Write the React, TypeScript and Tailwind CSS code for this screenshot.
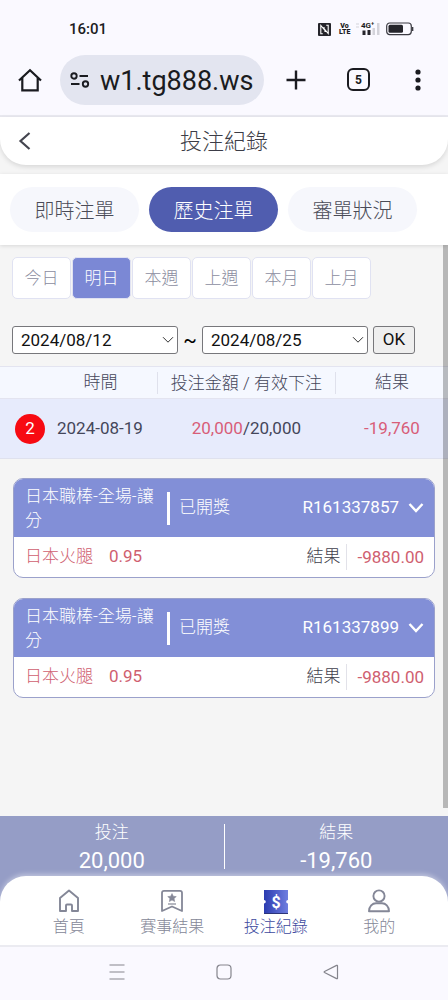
import { useState } from "react";
import type { ReactNode } from "react";

const TABS = ["即時注單", "歷史注單", "審單狀況"];
const RANGES = ["今日", "明日", "本週", "上週", "本月", "上月"];

const BETS = [
  { id: "R161337857", game: "日本職棒-全場-讓分", status: "已開獎", pick: "日本火腿", odds: "0.95", result: "-9880.00" },
  { id: "R161337899", game: "日本職棒-全場-讓分", status: "已開獎", pick: "日本火腿", odds: "0.95", result: "-9880.00" },
];

function StatusBar() {
  return (
    <div className="flex h-11 items-center justify-between pt-[14px] pr-[34px] pl-[69px] text-[#1c1c22]">
      <span className="text-[15px] font-medium">16:01</span>
      <div className="flex items-center">
        <svg width="13" height="13" viewBox="0 0 13 13" className="mr-2" aria-hidden="true">
          <rect width="13" height="13" rx="1" fill="#25252b" />
          <path d="M4.800 10.800H2.800V2.500L7 7.500V9M8.200 2.200h2v8.300L6 5.500V4" fill="none" stroke="#fff" strokeWidth="1.100" />
        </svg>
        <div className="mr-[6px] w-[11px] text-center text-[7px] leading-[6px] font-black">
          <div>Vo</div>
          <div>LTE</div>
        </div>
        <div className="relative mr-[6px] h-[14px] w-6">
          <svg width="24" height="14" viewBox="0 0 24 14" aria-hidden="true">
            <path d="M0 2h3M0 5h3" stroke="#d3d3da" />
            <path d="M6.500 8.500h3v4.500h-3zM11.500 8h3v5h-3z" fill="#25252b" />
            <path d="M16.500 6h2.500v7h-2.500zM21 1h2.500v12H21z" fill="#d3d3da" />
          </svg>
          <span className="absolute top-0 left-[5px] text-[8px] leading-[8px] font-bold">4G⁺</span>
        </div>
        <svg width="28" height="14" viewBox="0 0 28 14" aria-hidden="true">
          <rect x="0.700" y="1" width="24.600" height="11.600" rx="3" fill="none" stroke="#3b3b42" strokeWidth="1.200" />
          <rect x="2.500" y="2.800" width="14.500" height="8" rx="1.500" fill="#25252b" />
          <path d="M26.600 5v4" stroke="#3b3b42" strokeWidth="1.500" />
        </svg>
      </div>
    </div>
  );
}

function BrowserBar() {
  return (
    <div className="flex h-[73px] items-center border-b-2 border-[#e9e9f0] pr-[25px] pl-[18px] text-[#1a1b20]">
      <button type="button" aria-label="Home">
        <svg width="24" height="26" viewBox="0 0 24 26" fill="none" stroke="currentColor" strokeWidth="2.200" aria-hidden="true">
          <path d="M1 13.500 12 3.200l11 10.300M4.300 11v12.300h15.400V11" />
        </svg>
      </button>
      <div className="ml-[18px] flex h-[50px] flex-1 items-center rounded-full bg-[#e3e5f0] pl-[10px]">
        <svg width="20" height="18" viewBox="0 0 20 18" fill="none" stroke="currentColor" strokeWidth="1.900" aria-hidden="true">
          <circle cx="4" cy="5" r="2.700" />
          <path d="M9.500 5H18M1 13h8.500" />
          <circle cx="15.500" cy="13" r="2.700" />
        </svg>
        <span className="ml-[10px] pt-[2px] text-[27px] leading-9">w1.tg888.ws</span>
      </div>
      <button type="button" aria-label="New tab" className="ml-[22px]">
        <svg width="20" height="20" viewBox="0 0 20 20" stroke="currentColor" strokeWidth="2.400" aria-hidden="true">
          <path d="M10 .5v19M.5 10h19" />
        </svg>
      </button>
      <button
        type="button"
        className="ml-[41px] flex size-[23px] items-center justify-center rounded-[6px] border-2 border-current text-xs font-bold"
      >
        5
      </button>
      <button type="button" aria-label="Menu" className="ml-[43px]">
        <svg width="10" height="22" viewBox="0 0 10 22" fill="currentColor" aria-hidden="true">
          <circle cx="5" cy="3" r="2.600" />
          <circle cx="5" cy="11" r="2.600" />
          <circle cx="5" cy="19" r="2.600" />
        </svg>
      </button>
    </div>
  );
}

function DateSelect({ label, value }: { label: string; value: string }) {
  return (
    <div className="relative w-[166px]">
      <select
        aria-label={label}
        defaultValue={value}
        className="h-7 w-full appearance-none rounded-[3px] border border-[#77777b] bg-white px-2 text-[17px] leading-6 text-[#111]"
      >
        <option>{value}</option>
      </select>
      <svg
        className="pointer-events-none absolute top-2.5 right-1"
        width="12"
        height="8"
        viewBox="0 0 12 8"
        fill="none"
        stroke="#333"
        aria-hidden="true"
      >
        <path d="m1 1.200 5 5 5-5" />
      </svg>
    </div>
  );
}

function BetCard({ bet }: { bet: (typeof BETS)[number] }) {
  return (
    <article className="overflow-hidden rounded-[10px] border border-[#9ba1cb] bg-white text-[17px]">
      <div className="flex h-[58px] items-center bg-[#828fd7] pr-[10px] pl-[11px] text-white">
        <div className="w-[135px] font-light leading-6">{bet.game}</div>
        <div className="ml-[7px] h-[33px] w-[3px] bg-white" />
        <div className="ml-[9px] font-light">{bet.status}</div>
        <div className="ml-auto">{bet.id}</div>
        <button type="button" aria-label={`展開 ${bet.id}`} className="ml-[9px]">
          <svg width="16" height="12" viewBox="0 0 16 12" fill="none" stroke="currentColor" strokeWidth="2.400" aria-hidden="true">
            <path d="m1.500 2 6.500 7 6.500-7" />
          </svg>
        </button>
      </div>
      <div className="flex h-10 items-center pr-[10px] pl-[11px] text-[#cf6070]">
        <span className="font-light">{bet.pick}</span>
        <span className="ml-4">{bet.odds}</span>
        <span className="ml-auto font-light text-[#3f404c]">結果</span>
        <span className="ml-[6px] border-l border-[#e2e2e9] pl-[10px] leading-[26px]">{bet.result}</span>
      </div>
    </article>
  );
}

function NavItem({ label, active, children }: { label: string; active?: boolean; children: ReactNode }) {
  return (
    <a
      href="#"
      aria-current={active ? "page" : undefined}
      className={`flex flex-1 flex-col items-center gap-px text-base leading-6 font-light ${active ? "text-[#3d4a9e]" : "text-[#848797]"}`}
    >
      {children}
      {label}
    </a>
  );
}

export default function App() {
  const [tab, setTab] = useState("歷史注單");
  const [range, setRange] = useState("明日");

  return (
    <div className="flex min-h-screen flex-col bg-[#f5f5f5] font-[Roboto,'Noto_Sans_CJK_TC',sans-serif]">
      <div className="bg-[#faf9ff]">
        <StatusBar />
        <BrowserBar />
      </div>

      <header className="flex h-12 items-center rounded-b-[26px] bg-white px-4 shadow-[0_2px_5px_rgba(0,0,0,0.12)]">
        <button type="button" aria-label="返回" className="w-10 text-[#44454f]">
          <svg width="18" height="20" viewBox="0 0 18 20" fill="none" stroke="currentColor" strokeWidth="2.200" aria-hidden="true">
            <path d="m13.500 2-9 8 9 8" />
          </svg>
        </button>
        <h1 className="flex-1 pt-px text-center text-[22px] font-light text-[#3c3d47]">投注紀錄</h1>
        <div className="w-10" />
      </header>

      <nav className="mt-[9px] flex h-[71px] items-center gap-[10px] bg-white px-[10px] shadow-[0_1px_4px_rgba(0,0,0,0.12)]">
        {TABS.map((name) => (
          <button
            key={name}
            type="button"
            onClick={() => setTab(name)}
            className={`h-[45px] w-[129px] rounded-full pt-[2px] text-xl font-light ${
              tab === name ? "bg-[#505daf] text-white" : "bg-[#f6f7fc] text-[#4a4b57]"
            }`}
          >
            {name}
          </button>
        ))}
      </nav>

      <main className="relative flex-1">
        <div className="flex gap-px px-3 pt-3">
          {RANGES.map((name) => (
            <button
              key={name}
              type="button"
              onClick={() => setRange(name)}
              className={`h-[42px] w-[59px] rounded-[5px] border border-[#e0e2f2] pt-px text-[17px] font-light ${
                range === name ? "bg-[#7b88d5] text-white" : "bg-white text-[#8b8da0]"
              }`}
            >
              {name}
            </button>
          ))}
        </div>

        <form className="mt-[27px] flex items-center px-3 text-[17px]" onSubmit={(e) => e.preventDefault()}>
          <DateSelect label="開始日期" value="2024/08/12" />
          <span className="w-6 text-center text-xl leading-7">~</span>
          <DateSelect label="結束日期" value="2024/08/25" />
          <button
            type="submit"
            className="ml-[5px] h-7 w-[42px] rounded-[3px] border border-[#77777b] bg-[#efefef] text-[#111]"
          >
            OK
          </button>
        </form>

        <table className="mt-3 w-full table-fixed border-collapse text-center text-[17px] text-[#44465a]">
          <thead>
            <tr className="h-8 border-y border-[#e3e4f0] bg-[#f5f8ff]">
              <th className="w-[35%] py-0 pl-[44px] font-light">時間</th>
              <th className="w-[40%] p-0 font-light">
                <div className="border-x border-[#dfe1ec] leading-[22px]">投注金額 / 有效下注</div>
              </th>
              <th className="p-0 font-light">結果</th>
            </tr>
          </thead>
          <tbody>
            <tr className="h-[60px] border-b border-[#dfe1ee] bg-[#e7ebfc]">
              <td className="p-0">
                <div className="flex items-center pl-[15px]">
                  <span className="flex size-[30px] items-center justify-center rounded-full bg-[#f70a12] text-white">2</span>
                  <span className="ml-3">2024-08-19</span>
                </div>
              </td>
              <td className="p-0">
                <span className="text-[#d85d78]">20,000</span>/20,000
              </td>
              <td className="p-0 text-[#d85d78]">-19,760</td>
            </tr>
          </tbody>
        </table>

        <div className="flex flex-col gap-5 px-[13px] pt-[19px] pb-5">
          {BETS.map((bet) => (
            <BetCard key={bet.id} bet={bet} />
          ))}
        </div>

        {/* scroll thumb */}
        <div className="absolute top-0 right-0 bottom-2 w-[5px] bg-black/25" />
      </main>

      <footer>
        <div className="bg-[#959dc6]">
          <dl className="flex h-[60px] text-center text-white">
            <div className="flex-1">
              <dt className="pt-[3px] text-[17px] leading-[26px] font-light">投注</dt>
              <dd className="text-[22px] leading-8">20,000</dd>
            </div>
            <div className="mt-2 h-[45px] w-px bg-white" />
            <div className="flex-1">
              <dt className="pt-[3px] text-[17px] leading-[26px] font-light">結果</dt>
              <dd className="text-[22px] leading-8">-19,760</dd>
            </div>
          </dl>

          <nav className="flex h-[69px] rounded-t-[26px] bg-white px-[17px] pt-3 shadow-[0_-2px_5px_rgba(255,255,255,0.4)]">
            <NavItem label="首頁">
              <svg width="24" height="26" viewBox="0 0 24 26" fill="none" stroke="currentColor" strokeWidth="1.900" strokeLinejoin="round" aria-hidden="true">
                <path d="M3 10 12 2.500 21 10v13h-6v-5.500q0-1-1-1h-4q-1 0-1 1V23H3z" />
              </svg>
            </NavItem>
            <NavItem label="賽事結果">
              <svg width="24" height="26" viewBox="0 0 24 26" fill="none" stroke="currentColor" strokeWidth="1.800" strokeLinejoin="round" aria-hidden="true">
                <path d="M4 2.800h16q2 0 2 2V23l-10-4.500L2 23V4.800q0-2 2-2z" />
                <path d="m12 5.500 1.300 2.700 3 .4-2.200 2 .6 3-2.700-1.500-2.700 1.500.6-3-2.200-2 3-.4z" fill="currentColor" strokeWidth="0.500" />
                <path d="M8 16h8" strokeWidth="1.200" />
              </svg>
            </NavItem>
            <NavItem label="投注紀錄" active>
              <svg width="24" height="26" viewBox="0 0 24 26" aria-hidden="true">
                <defs>
                  <linearGradient id="ticket" x1="0" y1="0" x2="1" y2="0">
                    <stop offset="0" stopColor="#2b3bb0" />
                    <stop offset="1" stopColor="#6f7ee0" />
                  </linearGradient>
                </defs>
                <path d="M0 2h24v10a1.800 1.800 0 0 0 0 3.600V26H0V15.600a1.800 1.800 0 0 0 0-3.600z" fill="url(#ticket)" />
                <path d="M0 25.500h24" stroke="#2c3479" />
                <text x="12" y="19.500" textAnchor="middle" fontSize="16" fontWeight="700" fill="#fff">$</text>
              </svg>
            </NavItem>
            <NavItem label="我的">
              <svg width="24" height="26" viewBox="0 0 24 26" fill="none" stroke="currentColor" strokeWidth="1.900" strokeLinejoin="round" aria-hidden="true">
                <circle cx="12" cy="8" r="5.600" />
                <path d="M2 23.300c0-5 3.500-8 7-8h6c3.500 0 7 3 7 8z" />
              </svg>
            </NavItem>
          </nav>
        </div>

        <div className="flex h-[55px] items-center border-t-2 border-[#ebebf1] bg-[#faf9ff] px-16 pb-[3px] text-[#85858d]">
          <button type="button" aria-label="Recent apps" className="flex flex-1 justify-center">
            <svg width="16" height="16" viewBox="0 0 16 16" stroke="currentColor" strokeWidth="1.200" aria-hidden="true">
              <path d="M.5 1h15M.5 8h15M.5 15h15" />
            </svg>
          </button>
          <button type="button" aria-label="Home screen" className="flex flex-1 justify-center">
            <svg width="16" height="16" viewBox="0 0 16 16" fill="none" stroke="currentColor" strokeWidth="1.200" aria-hidden="true">
              <rect x="1" y="1" width="14" height="14" rx="3.500" />
            </svg>
          </button>
          <button type="button" aria-label="Back" className="flex flex-1 justify-center">
            <svg width="16" height="16" viewBox="0 0 16 16" fill="none" stroke="currentColor" strokeWidth="1.200" strokeLinejoin="round" aria-hidden="true">
              <path d="M14.500 1.800v12.400q0 .8-.9.400L1.500 8.500q-.8-.5 0-1L13.600 1.400q.9-.4.900.4z" />
            </svg>
          </button>
        </div>
      </footer>
    </div>
  );
}
